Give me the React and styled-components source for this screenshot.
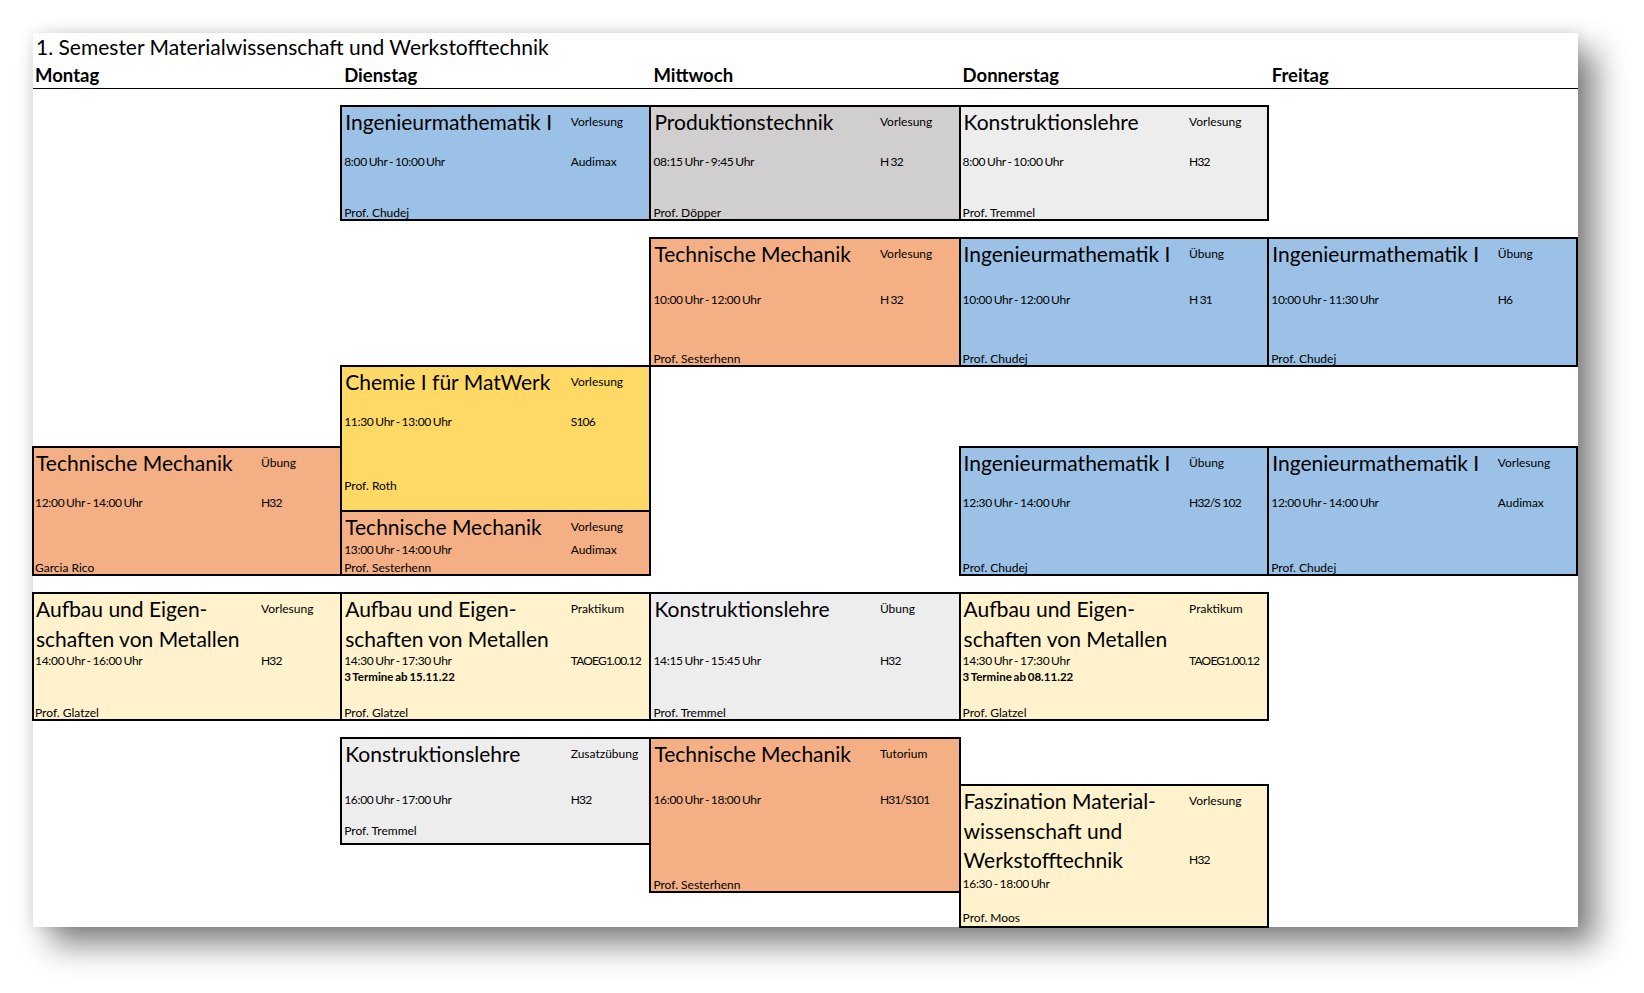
import styled, { createGlobalStyle } from 'styled-components'

const GlobalStyle = createGlobalStyle`
  html, body {
    margin: 0;
    background: #fff;
  }
  body {
    min-height: 100vh;
    font-family: Lato, "Open Sans", sans-serif;
    color: #000;
  }
  #root {
    height: 993px;
    overflow: hidden;
    padding-top: 33px;
    box-sizing: border-box;
  }
`

const BLUE = '#9bc2e6'
const ORANGE = '#f4b084'
const YELLOW = '#ffd966'
const CREAM = '#fff2cc'
const GREY = '#ededed'
const DARKGREY = '#d0cece'

const days = ['Montag', 'Dienstag', 'Mittwoch', 'Donnerstag', 'Freitag']

// col / from / to are lines of the timetable grid
const courses = [
  { col: 2, from: 1, to: 2, bg: BLUE, title: ['Ingenieurmathematik I'], tag: 'Vorlesung', time: '8:00 Uhr - 10:00 Uhr', room: 'Audimax', prof: 'Prof. Chudej', head: 47 },
  { col: 3, from: 1, to: 2, bg: DARKGREY, title: ['Produktionstechnik'], tag: 'Vorlesung', time: '08:15 Uhr - 9:45 Uhr', room: 'H 32', prof: 'Prof. Döpper', head: 47 },
  { col: 4, from: 1, to: 2, bg: GREY, title: ['Konstruktionslehre'], tag: 'Vorlesung', time: '8:00 Uhr - 10:00 Uhr', room: 'H32', prof: 'Prof. Tremmel', head: 47 },
  { col: 3, from: 3, to: 4, bg: ORANGE, title: ['Technische Mechanik'], tag: 'Vorlesung', time: '10:00 Uhr - 12:00 Uhr', room: 'H 32', prof: 'Prof. Sesterhenn', head: 53 },
  { col: 4, from: 3, to: 4, bg: BLUE, title: ['Ingenieurmathematik I'], tag: 'Übung', time: '10:00 Uhr - 12:00 Uhr', room: 'H 31', prof: 'Prof. Chudej', head: 53 },
  { col: 5, from: 3, to: 4, bg: BLUE, title: ['Ingenieurmathematik I'], tag: 'Übung', time: '10:00 Uhr - 11:30 Uhr', room: 'H6', prof: 'Prof. Chudej', head: 53 },
  { col: 2, from: 4, to: 6, bg: YELLOW, title: ['Chemie I für MatWerk'], tag: 'Vorlesung', time: '11:30 Uhr - 13:00 Uhr', room: 'S106', prof: 'Prof. Roth', head: 47, profGap: 18 },
  { col: 1, from: 5, to: 7, bg: ORANGE, title: ['Technische Mechanik'], tag: 'Übung', time: '12:00 Uhr - 14:00 Uhr', room: 'H32', prof: 'Garcia Rico', head: 47 },
  { col: 2, from: 6, to: 7, bg: ORANGE, title: ['Technische Mechanik'], tag: 'Vorlesung', time: '13:00 Uhr - 14:00 Uhr', room: 'Audimax', prof: 'Prof. Sesterhenn', head: 30 },
  { col: 4, from: 5, to: 7, bg: BLUE, title: ['Ingenieurmathematik I'], tag: 'Übung', time: '12:30 Uhr - 14:00 Uhr', room: 'H32/S 102', prof: 'Prof. Chudej', head: 47 },
  { col: 5, from: 5, to: 7, bg: BLUE, title: ['Ingenieurmathematik I'], tag: 'Vorlesung', time: '12:00 Uhr - 14:00 Uhr', room: 'Audimax', prof: 'Prof. Chudej', head: 47 },
  { col: 1, from: 8, to: 9, bg: CREAM, title: ['Aufbau und Eigen-', 'schaften von Metallen'], tag: 'Vorlesung', time: '14:00 Uhr - 16:00 Uhr', room: 'H32', prof: 'Prof. Glatzel', head: 59 },
  { col: 2, from: 8, to: 9, bg: CREAM, title: ['Aufbau und Eigen-', 'schaften von Metallen'], tag: 'Praktikum', time: '14:30 Uhr - 17:30 Uhr', room: 'TAOEG1.00.12', note: '3 Termine ab 15.11.22', prof: 'Prof. Glatzel', head: 59 },
  { col: 3, from: 8, to: 9, bg: GREY, title: ['Konstruktionslehre'], tag: 'Übung', time: '14:15 Uhr - 15:45 Uhr', room: 'H32', prof: 'Prof. Tremmel', head: 59 },
  { col: 4, from: 8, to: 9, bg: CREAM, title: ['Aufbau und Eigen-', 'schaften von Metallen'], tag: 'Praktikum', time: '14:30 Uhr - 17:30 Uhr', room: 'TAOEG1.00.12', note: '3 Termine ab 08.11.22', prof: 'Prof. Glatzel', head: 59 },
  { col: 2, from: 10, to: 12, bg: GREY, title: ['Konstruktionslehre'], tag: 'Zusatzübung', time: '16:00 Uhr - 17:00 Uhr', room: 'H32', prof: 'Prof. Tremmel', head: 53, profGap: 6 },
  { col: 3, from: 10, to: 13, bg: ORANGE, title: ['Technische Mechanik'], tag: 'Tutorium', time: '16:00 Uhr - 18:00 Uhr', room: 'H31/S101', prof: 'Prof. Sesterhenn', head: 53 },
  { col: 4, from: 11, to: 14, bg: CREAM, title: ['Faszination Material-', 'wissenschaft und', 'Werkstofftechnik'], tag: 'Vorlesung', time: '16:30 - 18:00 Uhr', room: 'H32', roomInHead: true, prof: 'Prof. Moos', head: 90, profGap: 2 },
]

function App() {
  return (
    <>
      <GlobalStyle />
      <Sheet>
        <SheetTitle>1. Semester Materialwissenschaft und Werkstofftechnik</SheetTitle>
        <DayRow>
          {days.map((day) => (
            <Day key={day}>{day}</Day>
          ))}
        </DayRow>
        <Timetable>
          {courses.map((c) => (
            <Card key={c.col + '-' + c.from} $col={c.col} $from={c.from} $to={c.to} $bg={c.bg} $head={c.head}>
              <CourseTitle>
                {c.title.map((line) => (
                  <div key={line}>{line}</div>
                ))}
              </CourseTitle>
              <Tag>{c.tag}</Tag>
              <Time>{c.time}</Time>
              <Room $inHead={c.roomInHead} $tight={/\d/.test(c.room)}>{c.room}</Room>
              {c.note && <Note>{c.note}</Note>}
              <Prof $gap={c.profGap || 0}>{c.prof}</Prof>
            </Card>
          ))}
        </Timetable>
      </Sheet>
    </>
  )
}

export default App

const Sheet = styled.div`
  box-sizing: border-box;
  width: 1545px;
  height: 894px;
  margin-left: 33px;
  background: #fff;
  box-shadow: 18px 18px 30px rgba(0, 0, 0, 0.48), 0 0 14px rgba(0, 0, 0, 0.12);
`

const SheetTitle = styled.h1`
  margin: 0;
  padding: 1px 0 0 3px;
  height: 27px;
  font-size: 21px;
  line-height: 26px;
  font-weight: 400;
  white-space: nowrap;
`

const DayRow = styled.div`
  display: grid;
  grid-template-columns: repeat(5, 309.2px);
  height: 27px;
  border-bottom: 1.5px solid #000;
`

const Day = styled.div`
  padding: 2px 0 0 2px;
  font-size: 18.5px;
  line-height: 24px;
  font-weight: 700;
`

const Timetable = styled.div`
  display: grid;
  grid-template-columns: repeat(3, 309.2px) 308.7px 308.7px;
  grid-template-rows: 114px 18px 128px 81px 64px 64px 18px 127px 18px 47px 59px 48px 35px;
  padding-top: 17px;
  margin-left: -1px;
`

const Card = styled.div`
  grid-column: ${(p) => p.$col};
  grid-row: ${(p) => p.$from} / ${(p) => p.$to};
  margin: -1px;
  margin-left: ${(p) => (p.$col === 1 ? 0 : '-1px')};
  box-sizing: border-box;
  border: 2px solid #000;
  background: ${(p) => p.$bg};
  display: grid;
  grid-template-columns: ${(p) => (p.$col === 1 ? '226px' : '226.5px')} 1fr;
  grid-template-rows: ${(p) => p.$head}px auto auto 1fr;
  padding-left: ${(p) => (p.$col === 1 ? '1px' : '2px')};
  overflow: hidden;
  min-width: 0;
`

const CourseTitle = styled.div`
  grid-column: 1;
  grid-row: 1;
  padding-left: 1px;
  font-size: 21px;
  line-height: 29.5px;
  white-space: nowrap;
`

const smallText = `
  font-size: 12px;
  line-height: 16px;
  white-space: nowrap;
`

const Tag = styled.div`
  ${smallText}
  grid-column: 2;
  grid-row: 1;
  padding-top: 7px;
`

const Time = styled.div`
  ${smallText}
  grid-column: 1;
  grid-row: 2;
  letter-spacing: -0.3px;
  word-spacing: -1px;
`

const Room = styled.div`
  ${smallText}
  grid-column: 2;
  grid-row: ${(p) => (p.$inHead ? 1 : 2)};
  align-self: ${(p) => (p.$inHead ? 'end' : 'start')};
  padding-bottom: ${(p) => (p.$inHead ? '8px' : 0)};
  letter-spacing: ${(p) => (p.$tight ? '-0.8px' : 0)};
`

const Note = styled.div`
  ${smallText}
  grid-column: 1;
  grid-row: 3;
  font-size: 11.5px;
  font-weight: 700;
  word-spacing: -1px;
`

const Prof = styled.div`
  ${smallText}
  grid-column: 1;
  grid-row: 4;
  align-self: end;
  line-height: 12px;
  padding-bottom: ${(p) => p.$gap}px;
`
